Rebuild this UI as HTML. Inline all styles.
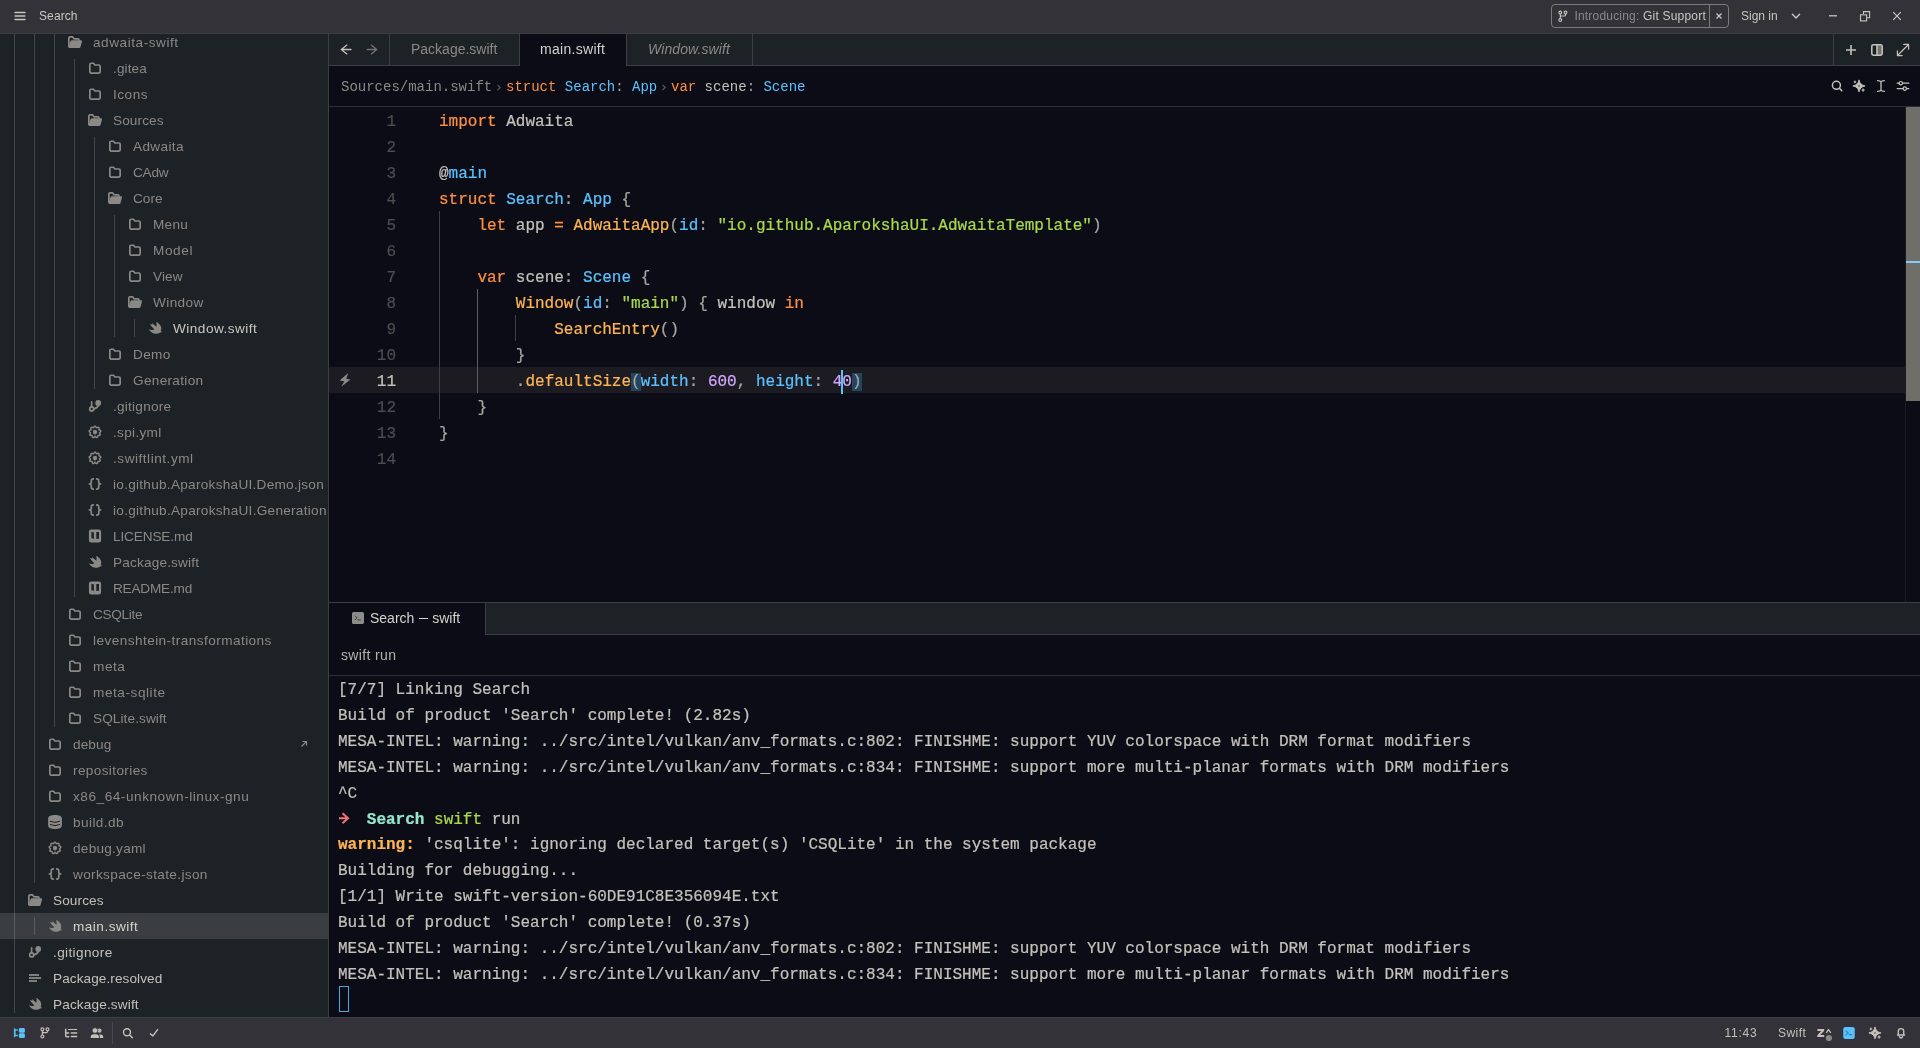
<!DOCTYPE html>
<html lang="en"><head><meta charset="utf-8"><title>Search</title>
<style>
*{box-sizing:border-box;margin:0;padding:0}
html,body{width:1920px;height:1048px;overflow:hidden;background:#0c0c16}
body{font-family:"Liberation Sans",sans-serif;font-size:14px;color:#c3c1ba;position:relative;-webkit-font-smoothing:antialiased}
.abs{position:absolute}
#app{position:absolute;left:0;top:0;width:1920px;height:1048px;will-change:transform}
svg{display:block}
/* title bar */
#title{position:absolute;left:0;top:0;width:1920px;height:34px;background:#333238;border-bottom:1px solid #3d3e41}
#title .name{position:absolute;left:39px;top:7.900px;font-size:12px;line-height:16px;color:#c8c6bf;letter-spacing:.1px}
#menu{position:absolute;left:14px;top:11px}
#banner{position:absolute;left:1551px;top:4px;width:178px;height:24px;border:1px solid #7d7c79;border-radius:4px}
#banner .div{position:absolute;left:157px;top:0;width:1px;height:22px;background:#7d7c79}
#banner .t1{position:absolute;left:22.400px;top:2.900px;letter-spacing:.2px;font-size:12px;line-height:16px;color:#8a8986;white-space:nowrap}
#banner .t1 b{font-weight:normal;color:#c8c6bf}
#signin{position:absolute;left:1741px;top:7.900px;font-size:12px;line-height:16px;color:#c8c6bf}
/* sidebar */
#side{position:absolute;left:0;top:34px;width:329px;height:983px;background:#1d2226;border-right:1px solid #3d3e41;overflow:hidden}
.row{position:absolute;left:0;width:328px;height:26px;white-space:nowrap}
.row .ico{position:absolute;top:5px;width:16px;height:16px}
.row .lbl{position:absolute;top:5.900px;line-height:16px;font-size:13.600px;letter-spacing:.12px}
.ti{color:#8a8986}.ti .ico{color:#8a8986}
.tn{color:#c3c1ba}.tn .ico{color:#8a8986}
.tb{color:#c9c7c0}.tb .ico{color:#8a8986}
.ts{background:#3a3e42;color:#d4d2cb}
.sym{position:absolute;left:300px;top:9px;color:#8a8986}
.guide{position:absolute;width:1px;background:rgba(255,255,255,.17)}
/* tabs */
#tabs{position:absolute;left:329px;top:34px;width:1591px;height:32px;background:#1d2226;border-bottom:1px solid #3d3e41}
.tab{position:absolute;top:0;height:32px;border-right:1px solid #3d3e41;font-size:14px;line-height:16px;color:#8a8986;white-space:nowrap}
.tab span{position:absolute;top:7.400px;letter-spacing:0}
.tab.on{background:#0c0c16;color:#d4d2cb;height:32px}
#crumbs{position:absolute;left:329px;top:66px;width:1591px;height:41px;background:#0c0c16;border-bottom:1px solid #2d2e33;font-family:"Liberation Mono",monospace;font-size:14px;line-height:16px;white-space:pre}
#crumbs .c{position:absolute;top:12.600px}
/* editor */
#ed{-webkit-text-stroke-width:.22px;position:absolute;left:329px;top:107px;width:1591px;height:495px;background:#0c0c16;overflow:hidden;font-family:"Liberation Mono",monospace;font-size:16px}
.cl{position:absolute;left:0;width:1576px;height:26px;line-height:26px;white-space:pre}
.cl.act{background:#1c1b22}
.ln{position:absolute;right:1509px;top:2px;color:#4d4c50;text-align:right}
.act .ln{color:#c3c1ba}
.cd{position:absolute;left:110px;top:2px;color:#c3c1ba}
.k{color:#fe8f40}.t{color:#5ac1fe}.f{color:#feb454}.s{color:#a9d94b}.n{color:#d2a6ff}.p{color:#a6a5a0}.l{color:#5ac1fe}.at{color:#c3c1ba}
.bm{background:#234560}
.cur{display:inline-block;width:2px;height:24px;background:#5ac1fe;vertical-align:top;margin:1px -1px 0 -1px}
.ig{position:absolute;width:1px;background:#3e3e45}
.ig.a{background:#5c5c61}
#sb{position:absolute;left:1576px;top:0;width:15px;height:495px;border-left:1px solid #1a1a22}
#sb .th{position:absolute;left:0;top:0;width:14px;height:294px;background:#6f6e69}
#sb .mk{position:absolute;left:0;top:154px;width:14px;height:2px;background:#86cafb}
/* terminal */
#tt{position:absolute;left:329px;top:602px;width:1591px;height:33px;background:#1d2226;border-top:1px solid #3d3e41;border-bottom:1px solid #3d3e41}
#tt .tab{height:32px}
#tbar{position:absolute;left:329px;top:635px;width:1591px;height:41px;background:#0c0c16;border-bottom:1px solid #2d2e33}
#tbar span{position:absolute;left:12px;top:12.300px;font-size:14px;line-height:16px;color:#b5b3ad;letter-spacing:.35px}
#term{-webkit-text-stroke-width:.22px;position:absolute;left:329px;top:676px;width:1591px;height:341px;background:#0c0c16;font-family:"Liberation Mono",monospace;font-size:16px;color:#c3c1ba;overflow:hidden}
.tl{position:absolute;left:9px;margin-top:1px;height:26px;line-height:26px;white-space:pre}
.tr{color:#ef7177}.tc{color:#95e6cb;font-weight:bold}.tg{color:#a9d94b}.tw{color:#feb454;font-weight:bold}
#tcur{position:absolute;left:10px;top:310px;width:10px;height:26px;border:1px solid #4ea6dc}
/* status */
#status{position:absolute;left:0;top:1017px;width:1920px;height:31px;background:#333238;border-top:1px solid #3f3f43}
#status .tx{position:absolute;top:6.800px;font-size:12px;line-height:16px;color:#c3c1ba}
.si{position:absolute;color:#c3c1ba}

</style></head>
<body>
<div id="app">
<div id="title">
  <svg class="abs" style="left:13px;top:10px" width="14" height="12" viewBox="0 0 14 12"><path d="M2 2.500h10M2 6h10M2 9.500h10" stroke="#c8c6bf" stroke-width="1.400" stroke-linecap="round"/></svg>
  <div class="name">Search</div>
  <div id="banner">
    <svg class="abs" style="left:4px;top:5px" width="14" height="14" viewBox="0 0 14 14" fill="none" stroke="#c8c6bf" stroke-width="1.100"><circle cx="4.300" cy="2.500" r="1.400"/><circle cx="9.500" cy="2.500" r="1.400"/><circle cx="4.300" cy="10" r="1.400"/><path d="M4.300 3.900V8.600M9.500 3.900V5Q9.500 6 8.500 6H5.300Q4.300 6 4.300 7"/></svg>
    <div class="t1">Introducing: <b>Git Support</b></div><div class="div"></div>
    <svg class="abs" style="left:163px;top:7px" width="8" height="8" viewBox="0 0 8 8"><path d="M1.500 1.500L6.500 6.500M6.500 1.500L1.500 6.500" stroke="#c8c6bf" stroke-width="1.300"/></svg>
  </div>
  <div id="signin">Sign in</div>
  <svg class="abs" style="left:1791px;top:12px" width="10" height="8" viewBox="0 0 10 8"><path d="M1.400 2.300L5 6L8.600 2.300" fill="none" stroke="#c8c6bf" stroke-width="1.400" stroke-linecap="round" stroke-linejoin="round"/></svg>
  <svg class="abs" style="left:1828px;top:14px" width="10" height="4" viewBox="0 0 10 4"><path d="M1 1.800H9" stroke="#c8c6bf" stroke-width="1.300"/></svg>
  <svg class="abs" style="left:1859px;top:10px" width="12" height="12" viewBox="0 0 12 12" fill="none" stroke="#c8c6bf" stroke-width="1.100"><path d="M4.500 4.200V1.600H10.600V7.700H8"/><rect x="1.500" y="4.800" width="6.100" height="6.100"/></svg>
  <svg class="abs" style="left:1892px;top:11px" width="10" height="10" viewBox="0 0 10 10"><path d="M1.200 1.200L8.800 8.800M8.800 1.200L1.200 8.800" stroke="#c8c6bf" stroke-width="1.200"/></svg>
</div>
<div id="side">
<div class="row ti" style="top:-5px"><span class="ico" style="left:67px"><svg class="ic" width="16" height="16" viewBox="0 0 16 16" ><path d="M1.85 12.4V4.1Q1.85 2.95 3 2.95H5.7L7 4.9H10.9Q12 4.9 12 6" fill="none" stroke="currentColor" stroke-width="1.7" stroke-linejoin="round" stroke-linecap="round"/><path d="M4.7 6.3H14.1Q15.3 6.3 15 7.4L13.5 13.1Q13.25 14.1 12.2 14.1H2.5Q1.4 14.1 1.75 13L3.5 7.2Q3.8 6.3 4.7 6.3Z" fill="currentColor"/></svg></span><span class="lbl" style="left:93px;letter-spacing:0.546px">adwaita-swift</span></div>
<div class="row ti" style="top:21px"><span class="ico" style="left:87px"><svg class="ic" width="16" height="16" viewBox="0 0 16 16" ><path d="M2.85 4.5Q2.85 3.25 4.1 3.25H6.5L7.9 5H11.9Q13.15 5 13.15 6.25V11.8Q13.15 13.05 11.9 13.05H4.1Q2.85 13.05 2.85 11.8Z" fill="none" stroke="currentColor" stroke-width="1.7" stroke-linejoin="round"/></svg></span><span class="lbl" style="left:113px;letter-spacing:0.12px">.gitea</span></div>
<div class="row ti" style="top:47px"><span class="ico" style="left:87px"><svg class="ic" width="16" height="16" viewBox="0 0 16 16" ><path d="M2.85 4.5Q2.85 3.25 4.1 3.25H6.5L7.9 5H11.9Q13.15 5 13.15 6.25V11.8Q13.15 13.05 11.9 13.05H4.1Q2.85 13.05 2.85 11.8Z" fill="none" stroke="currentColor" stroke-width="1.7" stroke-linejoin="round"/></svg></span><span class="lbl" style="left:113px;letter-spacing:0.52px">Icons</span></div>
<div class="row ti" style="top:73px"><span class="ico" style="left:87px"><svg class="ic" width="16" height="16" viewBox="0 0 16 16" ><path d="M1.85 12.4V4.1Q1.85 2.95 3 2.95H5.7L7 4.9H10.9Q12 4.9 12 6" fill="none" stroke="currentColor" stroke-width="1.7" stroke-linejoin="round" stroke-linecap="round"/><path d="M4.7 6.3H14.1Q15.3 6.3 15 7.4L13.5 13.1Q13.25 14.1 12.2 14.1H2.5Q1.4 14.1 1.75 13L3.5 7.2Q3.8 6.3 4.7 6.3Z" fill="currentColor"/></svg></span><span class="lbl" style="left:113px;letter-spacing:0.12px">Sources</span></div>
<div class="row ti" style="top:99px"><span class="ico" style="left:107px"><svg class="ic" width="16" height="16" viewBox="0 0 16 16" ><path d="M2.85 4.5Q2.85 3.25 4.1 3.25H6.5L7.9 5H11.9Q13.15 5 13.15 6.25V11.8Q13.15 13.05 11.9 13.05H4.1Q2.85 13.05 2.85 11.8Z" fill="none" stroke="currentColor" stroke-width="1.7" stroke-linejoin="round"/></svg></span><span class="lbl" style="left:133px;letter-spacing:0.37px">Adwaita</span></div>
<div class="row ti" style="top:125px"><span class="ico" style="left:107px"><svg class="ic" width="16" height="16" viewBox="0 0 16 16" ><path d="M2.85 4.5Q2.85 3.25 4.1 3.25H6.5L7.9 5H11.9Q13.15 5 13.15 6.25V11.8Q13.15 13.05 11.9 13.05H4.1Q2.85 13.05 2.85 11.8Z" fill="none" stroke="currentColor" stroke-width="1.7" stroke-linejoin="round"/></svg></span><span class="lbl" style="left:133px;letter-spacing:-0.214px">CAdw</span></div>
<div class="row ti" style="top:151px"><span class="ico" style="left:107px"><svg class="ic" width="16" height="16" viewBox="0 0 16 16" ><path d="M1.85 12.4V4.1Q1.85 2.95 3 2.95H5.7L7 4.9H10.9Q12 4.9 12 6" fill="none" stroke="currentColor" stroke-width="1.7" stroke-linejoin="round" stroke-linecap="round"/><path d="M4.7 6.3H14.1Q15.3 6.3 15 7.4L13.5 13.1Q13.25 14.1 12.2 14.1H2.5Q1.4 14.1 1.75 13L3.5 7.2Q3.8 6.3 4.7 6.3Z" fill="currentColor"/></svg></span><span class="lbl" style="left:133px;letter-spacing:0.019px">Core</span></div>
<div class="row ti" style="top:177px"><span class="ico" style="left:127px"><svg class="ic" width="16" height="16" viewBox="0 0 16 16" ><path d="M2.85 4.5Q2.85 3.25 4.1 3.25H6.5L7.9 5H11.9Q13.15 5 13.15 6.25V11.8Q13.15 13.05 11.9 13.05H4.1Q2.85 13.05 2.85 11.8Z" fill="none" stroke="currentColor" stroke-width="1.7" stroke-linejoin="round"/></svg></span><span class="lbl" style="left:153px;letter-spacing:0.286px">Menu</span></div>
<div class="row ti" style="top:203px"><span class="ico" style="left:127px"><svg class="ic" width="16" height="16" viewBox="0 0 16 16" ><path d="M2.85 4.5Q2.85 3.25 4.1 3.25H6.5L7.9 5H11.9Q13.15 5 13.15 6.25V11.8Q13.15 13.05 11.9 13.05H4.1Q2.85 13.05 2.85 11.8Z" fill="none" stroke="currentColor" stroke-width="1.7" stroke-linejoin="round"/></svg></span><span class="lbl" style="left:153px;letter-spacing:0.595px">Model</span></div>
<div class="row ti" style="top:229px"><span class="ico" style="left:127px"><svg class="ic" width="16" height="16" viewBox="0 0 16 16" ><path d="M2.85 4.5Q2.85 3.25 4.1 3.25H6.5L7.9 5H11.9Q13.15 5 13.15 6.25V11.8Q13.15 13.05 11.9 13.05H4.1Q2.85 13.05 2.85 11.8Z" fill="none" stroke="currentColor" stroke-width="1.7" stroke-linejoin="round"/></svg></span><span class="lbl" style="left:153px;letter-spacing:0.12px">View</span></div>
<div class="row ti" style="top:255px"><span class="ico" style="left:127px"><svg class="ic" width="16" height="16" viewBox="0 0 16 16" ><path d="M1.85 12.4V4.1Q1.85 2.95 3 2.95H5.7L7 4.9H10.9Q12 4.9 12 6" fill="none" stroke="currentColor" stroke-width="1.7" stroke-linejoin="round" stroke-linecap="round"/><path d="M4.7 6.3H14.1Q15.3 6.3 15 7.4L13.5 13.1Q13.25 14.1 12.2 14.1H2.5Q1.4 14.1 1.75 13L3.5 7.2Q3.8 6.3 4.7 6.3Z" fill="currentColor"/></svg></span><span class="lbl" style="left:153px;letter-spacing:0.4px">Window</span></div>
<div class="row tb" style="top:281px"><span class="ico" style="left:147px"><svg class="ic" width="16" height="16" viewBox="0 0 16 16" ><path d="M9.700 2C12 3.600 14.300 6 14.300 8.200C14.300 9.200 14 10 13.700 10.500C14.500 11.300 14.900 12 14.700 12.800C14.200 12.200 13.700 12.200 13.300 12.400C12 13.200 10.500 13.800 8.700 13.800C6 13.800 3.500 12 1.900 9.200C3.500 10.200 5.500 10.400 7.400 9.200C5.500 7.700 4 6 3 4.300L3.900 3.900C4.300 4.300 4.800 4.700 5.300 5.100L5.100 3.100C6.500 4.500 8 5.700 9.500 6.700C9.700 5.200 9.500 3.500 9.300 2.200Z" fill="currentColor"/></svg></span><span class="lbl" style="left:173px;letter-spacing:0.477px">Window.swift</span></div>
<div class="row ti" style="top:307px"><span class="ico" style="left:107px"><svg class="ic" width="16" height="16" viewBox="0 0 16 16" ><path d="M2.85 4.5Q2.85 3.25 4.1 3.25H6.5L7.9 5H11.9Q13.15 5 13.15 6.25V11.8Q13.15 13.05 11.9 13.05H4.1Q2.85 13.05 2.85 11.8Z" fill="none" stroke="currentColor" stroke-width="1.7" stroke-linejoin="round"/></svg></span><span class="lbl" style="left:133px;letter-spacing:0.319px">Demo</span></div>
<div class="row ti" style="top:333px"><span class="ico" style="left:107px"><svg class="ic" width="16" height="16" viewBox="0 0 16 16" ><path d="M2.85 4.5Q2.85 3.25 4.1 3.25H6.5L7.9 5H11.9Q13.15 5 13.15 6.25V11.8Q13.15 13.05 11.9 13.05H4.1Q2.85 13.05 2.85 11.8Z" fill="none" stroke="currentColor" stroke-width="1.7" stroke-linejoin="round"/></svg></span><span class="lbl" style="left:133px;letter-spacing:0.318px">Generation</span></div>
<div class="row ti" style="top:359px"><span class="ico" style="left:87px"><svg class="ic" width="16" height="16" viewBox="0 0 16 16" ><circle cx="4.7" cy="10.9" r="2" fill="none" stroke="currentColor" stroke-width="1.7"/><circle cx="11.2" cy="4.9" r="2.9" fill="currentColor"/><path d="M4.6 3.900V8.800M11.500 7C11 9.500 8.500 10.300 6.900 11" fill="none" stroke="currentColor" stroke-width="1.700" stroke-linecap="round"/></svg></span><span class="lbl" style="left:113px;letter-spacing:0.241px">.gitignore</span></div>
<div class="row ti" style="top:385px"><span class="ico" style="left:87px"><svg class="ic" width="16" height="16" viewBox="0 0 16 16" ><path d="M8.00 2.13 L8.25 2.18 L8.50 2.33 L8.72 2.56 L8.91 2.83 L9.08 3.11 L9.25 3.35 L9.41 3.54 L9.58 3.65 L9.79 3.68 L10.03 3.64 L10.31 3.55 L10.62 3.45 L10.95 3.37 L11.26 3.34 L11.54 3.38 L11.77 3.50 L11.93 3.71 L12.02 3.98 L12.05 4.29 L12.02 4.63 L11.98 4.95 L11.94 5.24 L11.94 5.49 L12.01 5.68 L12.15 5.84 L12.36 5.97 L12.63 6.08 L12.93 6.20 L13.23 6.35 L13.49 6.53 L13.68 6.74 L13.78 6.98 L13.77 7.24 L13.67 7.50 L13.48 7.76 L13.25 8.00 L13.01 8.22 L12.79 8.42 L12.64 8.61 L12.56 8.80 L12.57 9.01 L12.65 9.25 L12.78 9.51 L12.93 9.80 L13.07 10.10 L13.16 10.40 L13.16 10.69 L13.08 10.93 L12.91 11.13 L12.66 11.26 L12.35 11.34 L12.02 11.37 L11.70 11.39 L11.40 11.40 L11.16 11.45 L10.98 11.55 L10.85 11.71 L10.76 11.94 L10.69 12.23 L10.62 12.55 L10.53 12.87 L10.40 13.16 L10.23 13.38 L10.01 13.52 L9.75 13.55 L9.47 13.49 L9.19 13.36 L8.91 13.17 L8.65 12.97 L8.42 12.79 L8.20 12.67 L8.00 12.63 L7.80 12.67 L7.58 12.79 L7.35 12.97 L7.09 13.17 L6.81 13.36 L6.53 13.49 L6.25 13.55 L5.99 13.52 L5.77 13.38 L5.60 13.16 L5.47 12.87 L5.38 12.55 L5.31 12.23 L5.24 11.94 L5.15 11.71 L5.02 11.55 L4.84 11.45 L4.60 11.40 L4.30 11.39 L3.98 11.37 L3.65 11.34 L3.34 11.26 L3.09 11.13 L2.92 10.94 L2.84 10.69 L2.84 10.40 L2.93 10.10 L3.07 9.80 L3.22 9.51 L3.35 9.25 L3.43 9.01 L3.44 8.80 L3.36 8.61 L3.21 8.42 L2.99 8.22 L2.75 8.00 L2.52 7.76 L2.33 7.50 L2.23 7.24 L2.22 6.98 L2.32 6.74 L2.51 6.53 L2.77 6.35 L3.07 6.20 L3.37 6.08 L3.64 5.97 L3.85 5.84 L3.99 5.69 L4.06 5.49 L4.06 5.24 L4.02 4.95 L3.98 4.63 L3.95 4.29 L3.98 3.98 L4.07 3.71 L4.23 3.50 L4.46 3.38 L4.74 3.34 L5.05 3.37 L5.38 3.45 L5.69 3.55 L5.97 3.64 L6.21 3.68 L6.42 3.65 L6.59 3.54 L6.75 3.35 L6.92 3.11 L7.09 2.83 L7.28 2.56 L7.50 2.33 L7.75 2.18Z" fill="none" stroke="currentColor" stroke-width="1.5" stroke-linejoin="round"/><circle cx="8" cy="8" r="2.2" fill="currentColor"/><path d="M8 10v2.800" stroke="currentColor" stroke-width="1" opacity=".55"/></svg></span><span class="lbl" style="left:113px;letter-spacing:0.307px">.spi.yml</span></div>
<div class="row ti" style="top:411px"><span class="ico" style="left:87px"><svg class="ic" width="16" height="16" viewBox="0 0 16 16" ><path d="M8.00 2.13 L8.25 2.18 L8.50 2.33 L8.72 2.56 L8.91 2.83 L9.08 3.11 L9.25 3.35 L9.41 3.54 L9.58 3.65 L9.79 3.68 L10.03 3.64 L10.31 3.55 L10.62 3.45 L10.95 3.37 L11.26 3.34 L11.54 3.38 L11.77 3.50 L11.93 3.71 L12.02 3.98 L12.05 4.29 L12.02 4.63 L11.98 4.95 L11.94 5.24 L11.94 5.49 L12.01 5.68 L12.15 5.84 L12.36 5.97 L12.63 6.08 L12.93 6.20 L13.23 6.35 L13.49 6.53 L13.68 6.74 L13.78 6.98 L13.77 7.24 L13.67 7.50 L13.48 7.76 L13.25 8.00 L13.01 8.22 L12.79 8.42 L12.64 8.61 L12.56 8.80 L12.57 9.01 L12.65 9.25 L12.78 9.51 L12.93 9.80 L13.07 10.10 L13.16 10.40 L13.16 10.69 L13.08 10.93 L12.91 11.13 L12.66 11.26 L12.35 11.34 L12.02 11.37 L11.70 11.39 L11.40 11.40 L11.16 11.45 L10.98 11.55 L10.85 11.71 L10.76 11.94 L10.69 12.23 L10.62 12.55 L10.53 12.87 L10.40 13.16 L10.23 13.38 L10.01 13.52 L9.75 13.55 L9.47 13.49 L9.19 13.36 L8.91 13.17 L8.65 12.97 L8.42 12.79 L8.20 12.67 L8.00 12.63 L7.80 12.67 L7.58 12.79 L7.35 12.97 L7.09 13.17 L6.81 13.36 L6.53 13.49 L6.25 13.55 L5.99 13.52 L5.77 13.38 L5.60 13.16 L5.47 12.87 L5.38 12.55 L5.31 12.23 L5.24 11.94 L5.15 11.71 L5.02 11.55 L4.84 11.45 L4.60 11.40 L4.30 11.39 L3.98 11.37 L3.65 11.34 L3.34 11.26 L3.09 11.13 L2.92 10.94 L2.84 10.69 L2.84 10.40 L2.93 10.10 L3.07 9.80 L3.22 9.51 L3.35 9.25 L3.43 9.01 L3.44 8.80 L3.36 8.61 L3.21 8.42 L2.99 8.22 L2.75 8.00 L2.52 7.76 L2.33 7.50 L2.23 7.24 L2.22 6.98 L2.32 6.74 L2.51 6.53 L2.77 6.35 L3.07 6.20 L3.37 6.08 L3.64 5.97 L3.85 5.84 L3.99 5.69 L4.06 5.49 L4.06 5.24 L4.02 4.95 L3.98 4.63 L3.95 4.29 L3.98 3.98 L4.07 3.71 L4.23 3.50 L4.46 3.38 L4.74 3.34 L5.05 3.37 L5.38 3.45 L5.69 3.55 L5.97 3.64 L6.21 3.68 L6.42 3.65 L6.59 3.54 L6.75 3.35 L6.92 3.11 L7.09 2.83 L7.28 2.56 L7.50 2.33 L7.75 2.18Z" fill="none" stroke="currentColor" stroke-width="1.5" stroke-linejoin="round"/><circle cx="8" cy="8" r="2.2" fill="currentColor"/><path d="M8 10v2.800" stroke="currentColor" stroke-width="1" opacity=".55"/></svg></span><span class="lbl" style="left:113px;letter-spacing:0.526px">.swiftlint.yml</span></div>
<div class="row ti" style="top:437px"><span class="ico" style="left:87px"><svg class="ic" width="16" height="16" viewBox="0 0 16 16" ><path d="M6.300 2.900C4.900 2.900 4.300 3.500 4.300 4.700V6.300C4.300 7.300 3.600 7.900 2.300 8C3.600 8.100 4.300 8.700 4.300 9.700V11.300C4.300 12.500 4.900 13.100 6.300 13.100M9.700 2.900C11.100 2.900 11.700 3.500 11.700 4.700V6.300C11.700 7.300 12.400 7.900 13.700 8C12.400 8.100 11.700 8.700 11.700 9.700V11.300C11.700 12.500 11.100 13.100 9.700 13.100" fill="none" stroke="currentColor" stroke-width="1.700" stroke-linecap="round" stroke-linejoin="round"/></svg></span><span class="lbl" style="left:113px;letter-spacing:0.275px">io.github.AparokshaUI.Demo.json</span></div>
<div class="row ti" style="top:463px"><span class="ico" style="left:87px"><svg class="ic" width="16" height="16" viewBox="0 0 16 16" ><path d="M6.300 2.900C4.900 2.900 4.300 3.500 4.300 4.700V6.300C4.300 7.300 3.600 7.900 2.300 8C3.600 8.100 4.300 8.700 4.300 9.700V11.300C4.300 12.500 4.900 13.100 6.300 13.100M9.700 2.900C11.100 2.900 11.700 3.500 11.700 4.700V6.300C11.700 7.300 12.400 7.900 13.700 8C12.400 8.100 11.700 8.700 11.700 9.700V11.300C11.700 12.500 11.100 13.100 9.700 13.100" fill="none" stroke="currentColor" stroke-width="1.700" stroke-linecap="round" stroke-linejoin="round"/></svg></span><span class="lbl" style="left:113px;letter-spacing:0.28px">io.github.AparokshaUI.Generation</span></div>
<div class="row ti" style="top:489px"><span class="ico" style="left:87px"><svg class="ic" width="16" height="16" viewBox="0 0 16 16" ><path fill-rule="evenodd" d="M4.100 1.600H11.900Q14.100 1.600 14.100 3.800V12.200Q14.100 14.400 11.900 14.400H4.100Q1.900 14.400 1.900 12.200V3.800Q1.900 1.600 4.100 1.600ZM4.400 3.700V10L6.900 10.900V4.400ZM9.300 4.100V10.900L12 10.700V4.100Z" fill="currentColor"/></svg></span><span class="lbl" style="left:113px;letter-spacing:-0.126px">LICENSE.md</span></div>
<div class="row ti" style="top:515px"><span class="ico" style="left:87px"><svg class="ic" width="16" height="16" viewBox="0 0 16 16" ><path d="M9.700 2C12 3.600 14.300 6 14.300 8.200C14.300 9.200 14 10 13.700 10.500C14.500 11.300 14.900 12 14.700 12.800C14.200 12.200 13.700 12.200 13.300 12.400C12 13.200 10.500 13.800 8.700 13.800C6 13.800 3.500 12 1.900 9.200C3.500 10.200 5.500 10.400 7.400 9.200C5.500 7.700 4 6 3 4.300L3.900 3.900C4.300 4.300 4.800 4.700 5.300 5.100L5.100 3.100C6.500 4.500 8 5.700 9.500 6.700C9.700 5.200 9.500 3.500 9.300 2.200Z" fill="currentColor"/></svg></span><span class="lbl" style="left:113px;letter-spacing:0.177px">Package.swift</span></div>
<div class="row ti" style="top:541px"><span class="ico" style="left:87px"><svg class="ic" width="16" height="16" viewBox="0 0 16 16" ><path fill-rule="evenodd" d="M4.100 1.600H11.900Q14.100 1.600 14.100 3.800V12.200Q14.100 14.400 11.900 14.400H4.100Q1.900 14.400 1.900 12.200V3.800Q1.900 1.600 4.100 1.600ZM4.400 3.700V10L6.900 10.900V4.400ZM9.300 4.100V10.900L12 10.700V4.100Z" fill="currentColor"/></svg></span><span class="lbl" style="left:113px;letter-spacing:-0.195px">README.md</span></div>
<div class="row ti" style="top:567px"><span class="ico" style="left:67px"><svg class="ic" width="16" height="16" viewBox="0 0 16 16" ><path d="M2.85 4.5Q2.85 3.25 4.1 3.25H6.5L7.9 5H11.9Q13.15 5 13.15 6.25V11.8Q13.15 13.05 11.9 13.05H4.1Q2.85 13.05 2.85 11.8Z" fill="none" stroke="currentColor" stroke-width="1.7" stroke-linejoin="round"/></svg></span><span class="lbl" style="left:93px;letter-spacing:-0.314px">CSQLite</span></div>
<div class="row ti" style="top:593px"><span class="ico" style="left:67px"><svg class="ic" width="16" height="16" viewBox="0 0 16 16" ><path d="M2.85 4.5Q2.85 3.25 4.1 3.25H6.5L7.9 5H11.9Q13.15 5 13.15 6.25V11.8Q13.15 13.05 11.9 13.05H4.1Q2.85 13.05 2.85 11.8Z" fill="none" stroke="currentColor" stroke-width="1.7" stroke-linejoin="round"/></svg></span><span class="lbl" style="left:93px;letter-spacing:0.439px">levenshtein-transformations</span></div>
<div class="row ti" style="top:619px"><span class="ico" style="left:67px"><svg class="ic" width="16" height="16" viewBox="0 0 16 16" ><path d="M2.85 4.5Q2.85 3.25 4.1 3.25H6.5L7.9 5H11.9Q13.15 5 13.15 6.25V11.8Q13.15 13.05 11.9 13.05H4.1Q2.85 13.05 2.85 11.8Z" fill="none" stroke="currentColor" stroke-width="1.7" stroke-linejoin="round"/></svg></span><span class="lbl" style="left:93px;letter-spacing:0.555px">meta</span></div>
<div class="row ti" style="top:645px"><span class="ico" style="left:67px"><svg class="ic" width="16" height="16" viewBox="0 0 16 16" ><path d="M2.85 4.5Q2.85 3.25 4.1 3.25H6.5L7.9 5H11.9Q13.15 5 13.15 6.25V11.8Q13.15 13.05 11.9 13.05H4.1Q2.85 13.05 2.85 11.8Z" fill="none" stroke="currentColor" stroke-width="1.7" stroke-linejoin="round"/></svg></span><span class="lbl" style="left:93px;letter-spacing:0.56px">meta-sqlite</span></div>
<div class="row ti" style="top:671px"><span class="ico" style="left:67px"><svg class="ic" width="16" height="16" viewBox="0 0 16 16" ><path d="M2.85 4.5Q2.85 3.25 4.1 3.25H6.5L7.9 5H11.9Q13.15 5 13.15 6.25V11.8Q13.15 13.05 11.9 13.05H4.1Q2.85 13.05 2.85 11.8Z" fill="none" stroke="currentColor" stroke-width="1.7" stroke-linejoin="round"/></svg></span><span class="lbl" style="left:93px;letter-spacing:0.1px">SQLite.swift</span></div>
<div class="row ti" style="top:697px"><span class="ico" style="left:47px"><svg class="ic" width="16" height="16" viewBox="0 0 16 16" ><path d="M2.85 4.5Q2.85 3.25 4.1 3.25H6.5L7.9 5H11.9Q13.15 5 13.15 6.25V11.8Q13.15 13.05 11.9 13.05H4.1Q2.85 13.05 2.85 11.8Z" fill="none" stroke="currentColor" stroke-width="1.7" stroke-linejoin="round"/></svg></span><span class="lbl" style="left:73px;letter-spacing:0.12px">debug</span><svg class="sym" width="8" height="8" viewBox="0 0 8 8"><path d="M1.500 6.500L6.300 1.700M2.500 1.500h4v4" fill="none" stroke="currentColor" stroke-width="1.200"/></svg></div>
<div class="row ti" style="top:723px"><span class="ico" style="left:47px"><svg class="ic" width="16" height="16" viewBox="0 0 16 16" ><path d="M2.85 4.5Q2.85 3.25 4.1 3.25H6.5L7.9 5H11.9Q13.15 5 13.15 6.25V11.8Q13.15 13.05 11.9 13.05H4.1Q2.85 13.05 2.85 11.8Z" fill="none" stroke="currentColor" stroke-width="1.7" stroke-linejoin="round"/></svg></span><span class="lbl" style="left:73px;letter-spacing:0.372px">repositories</span></div>
<div class="row ti" style="top:749px"><span class="ico" style="left:47px"><svg class="ic" width="16" height="16" viewBox="0 0 16 16" ><path d="M2.85 4.5Q2.85 3.25 4.1 3.25H6.5L7.9 5H11.9Q13.15 5 13.15 6.25V11.8Q13.15 13.05 11.9 13.05H4.1Q2.85 13.05 2.85 11.8Z" fill="none" stroke="currentColor" stroke-width="1.7" stroke-linejoin="round"/></svg></span><span class="lbl" style="left:73px;letter-spacing:0.545px">x86_64-unknown-linux-gnu</span></div>
<div class="row ti" style="top:775px"><span class="ico" style="left:47px"><svg class="ic" width="16" height="16" viewBox="0 0 16 16" ><path d="M1.100 4.500C1.100 2 4 1 8 1S14.900 2 14.900 4.500V11.500C14.900 14 12 15 8 15S1.100 14 1.100 11.500Z" fill="currentColor"/><path d="M3.300 7.400Q8 9.600 12.700 7.400M3.300 10.600Q8 12.800 12.700 10.600" fill="none" stroke="#1d2226" stroke-width="1" stroke-linecap="round"/></svg></span><span class="lbl" style="left:73px;letter-spacing:0.421px">build.db</span></div>
<div class="row ti" style="top:801px"><span class="ico" style="left:47px"><svg class="ic" width="16" height="16" viewBox="0 0 16 16" ><path d="M8.00 2.13 L8.25 2.18 L8.50 2.33 L8.72 2.56 L8.91 2.83 L9.08 3.11 L9.25 3.35 L9.41 3.54 L9.58 3.65 L9.79 3.68 L10.03 3.64 L10.31 3.55 L10.62 3.45 L10.95 3.37 L11.26 3.34 L11.54 3.38 L11.77 3.50 L11.93 3.71 L12.02 3.98 L12.05 4.29 L12.02 4.63 L11.98 4.95 L11.94 5.24 L11.94 5.49 L12.01 5.68 L12.15 5.84 L12.36 5.97 L12.63 6.08 L12.93 6.20 L13.23 6.35 L13.49 6.53 L13.68 6.74 L13.78 6.98 L13.77 7.24 L13.67 7.50 L13.48 7.76 L13.25 8.00 L13.01 8.22 L12.79 8.42 L12.64 8.61 L12.56 8.80 L12.57 9.01 L12.65 9.25 L12.78 9.51 L12.93 9.80 L13.07 10.10 L13.16 10.40 L13.16 10.69 L13.08 10.93 L12.91 11.13 L12.66 11.26 L12.35 11.34 L12.02 11.37 L11.70 11.39 L11.40 11.40 L11.16 11.45 L10.98 11.55 L10.85 11.71 L10.76 11.94 L10.69 12.23 L10.62 12.55 L10.53 12.87 L10.40 13.16 L10.23 13.38 L10.01 13.52 L9.75 13.55 L9.47 13.49 L9.19 13.36 L8.91 13.17 L8.65 12.97 L8.42 12.79 L8.20 12.67 L8.00 12.63 L7.80 12.67 L7.58 12.79 L7.35 12.97 L7.09 13.17 L6.81 13.36 L6.53 13.49 L6.25 13.55 L5.99 13.52 L5.77 13.38 L5.60 13.16 L5.47 12.87 L5.38 12.55 L5.31 12.23 L5.24 11.94 L5.15 11.71 L5.02 11.55 L4.84 11.45 L4.60 11.40 L4.30 11.39 L3.98 11.37 L3.65 11.34 L3.34 11.26 L3.09 11.13 L2.92 10.94 L2.84 10.69 L2.84 10.40 L2.93 10.10 L3.07 9.80 L3.22 9.51 L3.35 9.25 L3.43 9.01 L3.44 8.80 L3.36 8.61 L3.21 8.42 L2.99 8.22 L2.75 8.00 L2.52 7.76 L2.33 7.50 L2.23 7.24 L2.22 6.98 L2.32 6.74 L2.51 6.53 L2.77 6.35 L3.07 6.20 L3.37 6.08 L3.64 5.97 L3.85 5.84 L3.99 5.69 L4.06 5.49 L4.06 5.24 L4.02 4.95 L3.98 4.63 L3.95 4.29 L3.98 3.98 L4.07 3.71 L4.23 3.50 L4.46 3.38 L4.74 3.34 L5.05 3.37 L5.38 3.45 L5.69 3.55 L5.97 3.64 L6.21 3.68 L6.42 3.65 L6.59 3.54 L6.75 3.35 L6.92 3.11 L7.09 2.83 L7.28 2.56 L7.50 2.33 L7.75 2.18Z" fill="none" stroke="currentColor" stroke-width="1.5" stroke-linejoin="round"/><circle cx="8" cy="8" r="2.2" fill="currentColor"/><path d="M8 10v2.800" stroke="currentColor" stroke-width="1" opacity=".55"/></svg></span><span class="lbl" style="left:73px;letter-spacing:0.256px">debug.yaml</span></div>
<div class="row ti" style="top:827px"><span class="ico" style="left:47px"><svg class="ic" width="16" height="16" viewBox="0 0 16 16" ><path d="M6.300 2.900C4.900 2.900 4.300 3.500 4.300 4.700V6.300C4.300 7.300 3.600 7.900 2.300 8C3.600 8.100 4.300 8.700 4.300 9.700V11.300C4.300 12.500 4.900 13.100 6.300 13.100M9.700 2.900C11.100 2.900 11.700 3.500 11.700 4.700V6.300C11.700 7.300 12.400 7.900 13.700 8C12.400 8.100 11.700 8.700 11.700 9.700V11.300C11.700 12.500 11.100 13.100 9.700 13.100" fill="none" stroke="currentColor" stroke-width="1.700" stroke-linecap="round" stroke-linejoin="round"/></svg></span><span class="lbl" style="left:73px;letter-spacing:0.353px">workspace-state.json</span></div>
<div class="row tn" style="top:853px"><span class="ico" style="left:27px"><svg class="ic" width="16" height="16" viewBox="0 0 16 16" ><path d="M1.85 12.4V4.1Q1.85 2.95 3 2.95H5.7L7 4.9H10.9Q12 4.9 12 6" fill="none" stroke="currentColor" stroke-width="1.7" stroke-linejoin="round" stroke-linecap="round"/><path d="M4.7 6.3H14.1Q15.3 6.3 15 7.4L13.5 13.1Q13.25 14.1 12.2 14.1H2.5Q1.4 14.1 1.75 13L3.5 7.2Q3.8 6.3 4.7 6.3Z" fill="currentColor"/></svg></span><span class="lbl" style="left:53px;letter-spacing:0.12px">Sources</span></div>
<div class="row tn ts" style="top:879px"><span class="ico" style="left:47px"><svg class="ic" width="16" height="16" viewBox="0 0 16 16" ><path d="M9.700 2C12 3.600 14.300 6 14.300 8.200C14.300 9.200 14 10 13.700 10.500C14.500 11.300 14.900 12 14.700 12.800C14.200 12.200 13.700 12.200 13.300 12.400C12 13.200 10.500 13.800 8.700 13.800C6 13.800 3.500 12 1.900 9.200C3.500 10.200 5.500 10.400 7.400 9.200C5.500 7.700 4 6 3 4.300L3.900 3.900C4.300 4.300 4.800 4.700 5.300 5.100L5.100 3.100C6.500 4.500 8 5.700 9.500 6.700C9.700 5.200 9.500 3.500 9.300 2.200Z" fill="currentColor"/></svg></span><span class="lbl" style="left:73px;letter-spacing:0.487px">main.swift</span></div>
<div class="row tn" style="top:905px"><span class="ico" style="left:27px"><svg class="ic" width="16" height="16" viewBox="0 0 16 16" ><circle cx="4.7" cy="10.9" r="2" fill="none" stroke="currentColor" stroke-width="1.7"/><circle cx="11.2" cy="4.9" r="2.9" fill="currentColor"/><path d="M4.6 3.900V8.800M11.500 7C11 9.500 8.500 10.300 6.900 11" fill="none" stroke="currentColor" stroke-width="1.700" stroke-linecap="round"/></svg></span><span class="lbl" style="left:53px;letter-spacing:0.367px">.gitignore</span></div>
<div class="row tn" style="top:931px"><span class="ico" style="left:27px"><svg class="ic" width="16" height="16" viewBox="0 0 16 16" ><rect x="2" y="4.100" width="10" height="1.800" fill="currentColor"/><rect x="2" y="7.100" width="12.100" height="1.800" fill="currentColor"/><rect x="2" y="10.100" width="8" height="1.800" fill="currentColor"/></svg></span><span class="lbl" style="left:53px;letter-spacing:0.079px">Package.resolved</span></div>
<div class="row tn" style="top:957px"><span class="ico" style="left:27px"><svg class="ic" width="16" height="16" viewBox="0 0 16 16" ><path d="M9.700 2C12 3.600 14.300 6 14.300 8.200C14.300 9.200 14 10 13.700 10.500C14.500 11.300 14.900 12 14.700 12.800C14.200 12.200 13.700 12.200 13.300 12.400C12 13.200 10.500 13.800 8.700 13.800C6 13.800 3.500 12 1.900 9.200C3.500 10.200 5.500 10.400 7.400 9.200C5.500 7.700 4 6 3 4.300L3.900 3.900C4.300 4.300 4.800 4.700 5.300 5.100L5.100 3.100C6.500 4.500 8 5.700 9.500 6.700C9.700 5.200 9.500 3.500 9.300 2.200Z" fill="currentColor"/></svg></span><span class="lbl" style="left:53px;letter-spacing:0.146px">Package.swift</span></div>
<div class="guide" style="left:14px;top:-5px;height:984px"></div>
<div class="guide" style="left:34px;top:-5px;height:854px"></div>
<div class="guide" style="left:34px;top:883px;height:18px"></div>
<div class="guide" style="left:54px;top:-5px;height:698px"></div>
<div class="guide" style="left:74px;top:25px;height:538px"></div>
<div class="guide" style="left:94px;top:103px;height:252px"></div>
<div class="guide" style="left:114px;top:181px;height:122px"></div>
<div class="guide" style="left:134px;top:285px;height:18px"></div>
</div>
<div id="tabs">
  <div class="tab" style="left:0;width:61px">
    <svg class="abs" style="left:10px;top:8px" width="14" height="14" viewBox="0 0 14 14" fill="none" stroke="#c3c1ba" stroke-width="1.300" stroke-linecap="round" stroke-linejoin="round"><path d="M12 7.500H2.600M7.900 3.100L2.300 7.500L7.900 11.900"/></svg>
    <svg class="abs" style="left:36px;top:8px" width="14" height="14" viewBox="0 0 14 14" fill="none" stroke="#75746f" stroke-width="1.300" stroke-linecap="round" stroke-linejoin="round"><path d="M2.200 7.500H11.400M6.300 3.100L11.700 7.500L6.300 11.900"/></svg>
  </div>
  <div class="tab" style="left:61px;width:130px"><span style="left:21px">Package.swift</span></div>
  <div class="tab on" style="left:191px;width:107px"><span style="left:20px;letter-spacing:.3px">main.swift</span></div>
  <div class="tab" style="left:298px;width:126px"><span style="left:21px;font-style:italic;letter-spacing:.1px">Window.swift</span></div>
  <div class="abs" style="left:1504px;top:0;width:1px;height:31px;background:#3d3e41"></div>
  <svg class="abs" style="left:1515px;top:9px" width="14" height="14" viewBox="0 0 14 14"><path d="M7 2V12M2 7H12" stroke="#c3c1ba" stroke-width="1.600"/></svg>
  <svg class="abs" style="left:1541px;top:9px" width="14" height="14" viewBox="0 0 14 14"><rect x="1.800" y="1.800" width="10.400" height="10.400" rx="1.600" fill="none" stroke="#c3c1ba" stroke-width="1.600"/><rect x="7" y="2" width="4.800" height="10" fill="#c3c1ba" opacity=".5"/><path d="M7 2V12" stroke="#c3c1ba" stroke-width="1.600"/></svg>
  <svg class="abs" style="left:1566px;top:8px" width="16" height="16" viewBox="0 0 16 16" fill="none" stroke="#c3c1ba" stroke-width="1.200" stroke-linecap="round" stroke-linejoin="round"><path d="M2.500 13.500L13.500 2.500M8.800 2.400H13.600V7.200M2.400 8.800V13.600H7.200"/></svg>
</div>
<div id="crumbs"><span class="c" style="left:12px;color:#8a8986">Sources/main.swift</span><svg class="abs" style="left:167px;top:17px" width="6" height="9" viewBox="0 0 6 9"><path d="M1.500 1.800L4.200 4.500L1.500 7.200" fill="none" stroke="#5f5f5e" stroke-width="1.100"/></svg><span class="c" style="left:177px"><span class="k">struct</span> <span class="t">Search</span><span class="p">:</span> <span class="t">App</span></span><svg class="abs" style="left:332px;top:17px" width="6" height="9" viewBox="0 0 6 9"><path d="M1.500 1.800L4.200 4.500L1.500 7.200" fill="none" stroke="#5f5f5e" stroke-width="1.100"/></svg><span class="c" style="left:342px"><span class="k">var</span> scene<span class="p">:</span> <span class="t">Scene</span></span>
  <svg class="abs" style="left:1500px;top:12px" width="16" height="16" viewBox="0 0 16 16" fill="none" stroke="#c3c1ba" stroke-width="1.500" stroke-linecap="round"><circle cx="7.400" cy="7.300" r="4"/><path d="M10.400 10.300L12.700 12.600"/></svg>
  <svg class="abs" style="left:1522px;top:12px" width="16" height="16" viewBox="0 0 16 16" fill="#c3c1ba"><path d="M8 1.900Q8.900 7 14.100 7.900Q8.900 8.800 8 13.900Q7.100 8.800 1.900 7.900Q7.100 7 8 1.900Z" stroke="#c3c1ba" stroke-width=".900" stroke-linejoin="round"/><circle cx="8" cy="7.900" r="1" fill="#0c0c16" opacity=".5"/><path d="M3.900 2.300L5.500 3.900L3.900 5.500L2.300 3.900Z" opacity=".85"/><path d="M12.100 10.300L13.900 12.100L12.100 13.900L10.300 12.100Z" opacity=".85"/></svg>
  <svg class="abs" style="left:1544px;top:12px" width="16" height="16" viewBox="0 0 16 16" fill="none" stroke="#c3c1ba" stroke-width="1.300" stroke-linecap="round"><path d="M8 3.800V12.200M4.600 2.600Q7.400 2.600 8 3.900Q8.600 2.600 11.400 2.600M4.600 13.400Q7.400 13.400 8 12.100Q8.600 13.400 11.400 13.400"/></svg>
  <svg class="abs" style="left:1566px;top:12px" width="16" height="16" viewBox="0 0 16 16" fill="none" stroke="#c3c1ba" stroke-width="1.200" stroke-linecap="round"><path d="M2.200 5.200H4M7.600 5.200H13.800M2.200 10.600H8M11.600 10.600H13.800"/><circle cx="5.800" cy="5.200" r="1.700"/><circle cx="9.800" cy="10.600" r="1.700"/></svg>
</div>
<div id="ed">
<div class="cl" style="top:0px"><span class="ln">1</span><span class="cd"><span class="k">import</span> Adwaita</span></div>
<div class="cl" style="top:26px"><span class="ln">2</span><span class="cd"></span></div>
<div class="cl" style="top:52px"><span class="ln">3</span><span class="cd"><span class="at">@</span><span class="t">main</span></span></div>
<div class="cl" style="top:78px"><span class="ln">4</span><span class="cd"><span class="k">struct</span> <span class="t">Search</span><span class="p">:</span> <span class="t">App</span> <span class="p">{</span></span></div>
<div class="cl" style="top:104px"><span class="ln">5</span><span class="cd">    <span class="k">let</span> app <span class="k">=</span> <span class="f">AdwaitaApp</span><span class="p">(</span><span class="l">id</span><span class="p">:</span> <span class="s">&quot;io.github.AparokshaUI.AdwaitaTemplate&quot;</span><span class="p">)</span></span></div>
<div class="cl" style="top:130px"><span class="ln">6</span><span class="cd"></span></div>
<div class="cl" style="top:156px"><span class="ln">7</span><span class="cd">    <span class="k">var</span> scene<span class="p">:</span> <span class="t">Scene</span> <span class="p">{</span></span></div>
<div class="cl" style="top:182px"><span class="ln">8</span><span class="cd">        <span class="f">Window</span><span class="p">(</span><span class="l">id</span><span class="p">:</span> <span class="s">&quot;main&quot;</span><span class="p">)</span> <span class="p">{</span> window <span class="k">in</span></span></div>
<div class="cl" style="top:208px"><span class="ln">9</span><span class="cd">            <span class="f">SearchEntry</span><span class="p">()</span></span></div>
<div class="cl" style="top:234px"><span class="ln">10</span><span class="cd">        <span class="p">}</span></span></div>
<div class="cl act" style="top:260px"><span class="ln">11</span><span class="cd">        <span class="p">.</span><span class="f">defaultSize</span><span class="bm"><span class="p">(</span></span><span class="l">width</span><span class="p">:</span> <span class="n">600</span><span class="p">,</span> <span class="l">height</span><span class="p">:</span> <span class="n">4</span><span class="cur"></span><span class="n">0</span><span class="bm"><span class="p">)</span></span></span></div>
<div class="cl" style="top:286px"><span class="ln">12</span><span class="cd">    <span class="p">}</span></span></div>
<div class="cl" style="top:312px"><span class="ln">13</span><span class="cd"><span class="p">}</span></span></div>
<div class="cl" style="top:338px"><span class="ln">14</span><span class="cd"></span></div>
<svg class="abs" style="left:8px;top:264px" width="16" height="18" viewBox="0 0 16 18"><path d="M11.300 2.100L2.600 9.600L7.300 10.200L4.300 15.800L13.400 8.500L9.200 7.700Z" fill="#8a8986"/></svg>
<div class="ig" style="left:110px;top:104px;height:208px"></div>
<div class="ig a" style="left:148px;top:182px;height:104px"></div>
<div class="ig" style="left:186px;top:208px;height:26px"></div>
<div id="sb"><div class="th"></div><div class="mk"></div></div>
</div>
<div id="tt"><div class="tab on" style="left:0;width:157px">
  <svg class="abs" style="left:23px;top:9px" width="12" height="12" viewBox="0 0 12 12"><rect x="0" y="0" width="12" height="12" rx="1.600" fill="#8d8c88"/><path d="M3.200 3.900L5 5.800L3.200 7.700M6 7.900H8.400" fill="none" stroke="#3a3a3c" stroke-width="1" stroke-linecap="round" stroke-linejoin="round"/></svg>
  <span style="left:41px">Search <i style="display:inline-block;width:9.500px;height:1.200px;background:currentColor;vertical-align:4.500px;margin:0 .3px"></i> swift</span></div></div>
<div id="tbar"><span>swift run</span></div>
<div id="term">
<div class="tl" style="top:0.00px">[7/7] Linking Search</div>
<div class="tl" style="top:25.90px">Build of product 'Search' complete! (2.82s)</div>
<div class="tl" style="top:51.80px">MESA-INTEL: warning: ../src/intel/vulkan/anv_formats.c:802: FINISHME: support YUV colorspace with DRM format modifiers</div>
<div class="tl" style="top:77.70px">MESA-INTEL: warning: ../src/intel/vulkan/anv_formats.c:834: FINISHME: support more multi-planar formats with DRM modifiers</div>
<div class="tl" style="top:103.60px">^C</div>
<div class="tl" style="top:129.50px"><span class="tr"><svg width="12" height="14" viewBox="0 0 12 14" style="display:inline-block;vertical-align:-2px;margin-right:-2.400px"><path d="M1 6.300H9.600M4.500 1.300L10 6.300L4.500 11.300" fill="none" stroke="#f07178" stroke-width="2" stroke-linejoin="miter"/></svg></span>  <span class="tc">Search</span> <span class="tg">swift</span> run</div>
<div class="tl" style="top:155.40px"><span class="tw">warning:</span> 'csqlite': ignoring declared target(s) 'CSQLite' in the system package</div>
<div class="tl" style="top:181.30px">Building for debugging...</div>
<div class="tl" style="top:207.20px">[1/1] Write swift-version-60DE91C8E356094E.txt</div>
<div class="tl" style="top:233.10px">Build of product 'Search' complete! (0.37s)</div>
<div class="tl" style="top:259.00px">MESA-INTEL: warning: ../src/intel/vulkan/anv_formats.c:802: FINISHME: support YUV colorspace with DRM format modifiers</div>
<div class="tl" style="top:284.90px">MESA-INTEL: warning: ../src/intel/vulkan/anv_formats.c:834: FINISHME: support more multi-planar formats with DRM modifiers</div>
<div id="tcur"></div>
</div>
<div id="status">
  <svg class="abs" style="left:11px;top:7px" width="16" height="16" viewBox="0 0 16 16" fill="#5ac1fe"><path d="M2.900 3L4.600 3.900V4.500L6.900 4.300V5.700L4.600 5.500V9.800L6.900 9.700V11.300L4.600 11.100V11.600L2.900 12.500Z"/><rect x="7.900" y="3.100" width="6" height="4.500" rx="1.300"/><rect x="7.900" y="8.400" width="6" height="4.600" rx="1.300"/><rect x="8.500" y="7" width="4.800" height="2" opacity=".55"/></svg>
  <svg class="abs" style="left:37px;top:7px" width="16" height="16" viewBox="0 0 16 16" fill="none" stroke="#c3c1ba" stroke-width="1.200"><circle cx="5.400" cy="4.300" r="1.450"/><circle cx="10.500" cy="4.300" r="1.450"/><circle cx="5.400" cy="11.450" r="1.450"/><path d="M5.400 5.800V10M10.500 5.800V6.500Q10.500 7.700 9.300 7.700H6.600Q5.400 7.700 5.400 8.900"/></svg>
  <svg class="abs" style="left:63px;top:7px" width="16" height="16" viewBox="0 0 16 16" fill="none" stroke="#c3c1ba" stroke-linecap="round"><path d="M5.500 4.500H13.700" stroke-width="1.200"/><path d="M8.300 8H13.700M8.300 11.500H13.700" stroke-width="1.400"/><path d="M2.700 4.300V10.600Q2.700 11.700 3.800 11.700H5.600M2.700 8H5.600" stroke-width="1.500"/></svg>
  <svg class="abs" style="left:89px;top:7px" width="16" height="16" viewBox="0 0 16 16" fill="#c3c1ba"><circle cx="10.400" cy="5.600" r="2.200" opacity=".9"/><circle cx="6" cy="5.500" r="2.700" stroke="#333238" stroke-width=".600"/><path d="M1.700 12.900V12.200Q1.700 9.200 4.700 9.200H7Q10 9.200 10 12.200V12.900Z"/><path d="M10.800 12.900V11.800Q10.800 10.400 10.200 9.500H11.600Q14.200 9.500 14.200 12.200V12.900Z"/></svg>
  <div class="abs" style="left:112px;top:4px;width:1px;height:22px;background:#48474c"></div>
  <svg class="abs" style="left:120px;top:7px" width="16" height="16" viewBox="0 0 16 16" fill="none" stroke="#c3c1ba" stroke-width="1.400" stroke-linecap="round"><circle cx="7" cy="7.300" r="3.500"/><path d="M9.700 10L12.400 12.700"/></svg>
  <svg class="abs" style="left:146px;top:7px" width="16" height="16" viewBox="0 0 16 16" fill="none" stroke="#c3c1ba" stroke-width="1.400" stroke-linecap="round" stroke-linejoin="round"><path d="M4.400 8.900L6.900 10.900L11.600 4.600"/></svg>
  <div class="tx" style="left:1724.500px;letter-spacing:.75px">11:43</div>
  <div class="tx" style="left:1778px;letter-spacing:.45px">Swift</div>
  <svg class="abs" style="left:1815px;top:7px" width="20" height="18" viewBox="0 0 20 18"><path d="M2.400 4H9.200V5.700L5.300 10H9.200V12H2.300V10.300L6.200 6H2.400Z" fill="#c3c1ba"/><path d="M11.300 7.800L13.500 4.500L15.800 7.800" fill="none" stroke="#c3c1ba" stroke-width="1.300" stroke-linejoin="round"/><circle cx="13.900" cy="13" r="3.100" fill="#8a8986"/></svg>
  <svg class="abs" style="left:1843px;top:9px" width="12" height="12" viewBox="0 0 12 12"><rect x=".25" y="0" width="11.500" height="11.900" rx="2.200" fill="#5ac1fe"/><path d="M3 4.100L5.200 6L3 7.900M6.300 7.600H8.700" fill="none" stroke="#3a7fa8" stroke-width="1.200" stroke-linecap="round" stroke-linejoin="round"/></svg>
  <svg class="abs" style="left:1867px;top:7px" width="16" height="16" viewBox="0 0 16 16" fill="#c3c1ba"><path d="M8 1.900Q8.900 7 14.100 7.900Q8.900 8.800 8 13.900Q7.100 8.800 1.900 7.900Q7.100 7 8 1.900Z" stroke="#c3c1ba" stroke-width=".900" stroke-linejoin="round"/><circle cx="8" cy="7.900" r="1" fill="#333238" opacity=".5"/><path d="M3.900 2.300L5.500 3.900L3.900 5.500L2.300 3.900Z" opacity=".85"/><path d="M12.100 10.300L13.900 12.100L12.100 13.900L10.300 12.100Z" opacity=".85"/></svg>
  <svg class="abs" style="left:1893px;top:7px" width="16" height="16" viewBox="0 0 16 16" fill="none" stroke="#c3c1ba" stroke-linecap="round" stroke-linejoin="round"><path d="M5.300 9.500V6.300C5.300 4.500 6.400 3.600 8 3.600S10.700 4.500 10.700 6.300V9.500" stroke-width="1.400"/><path d="M4.500 9.900H11.500" stroke-width="1.500"/><path d="M6.400 11.400Q6.600 13 8 13T9.600 11.400" stroke-width="1.300"/></svg>
</div>
</div>

</body></html>
